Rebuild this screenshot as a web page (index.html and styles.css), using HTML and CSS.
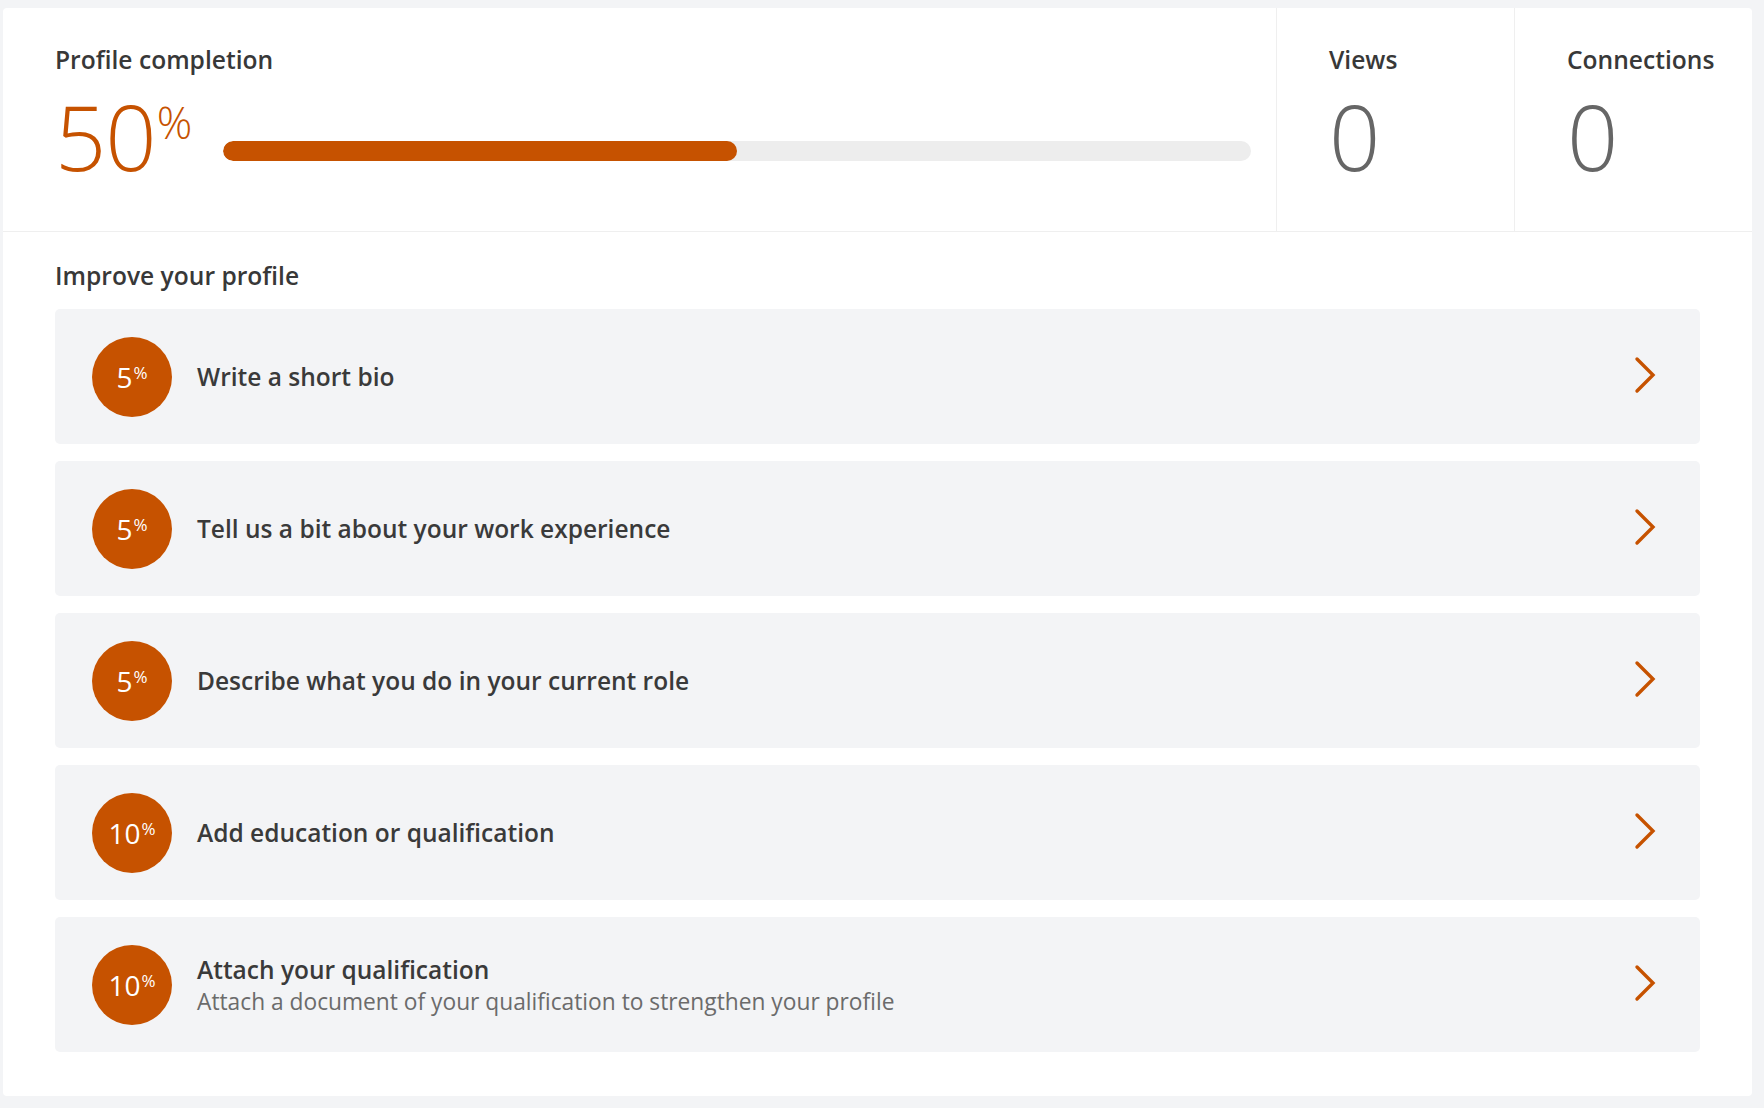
FILE: index.html
```
<!DOCTYPE html>
<html lang="en">
<head>
<meta charset="utf-8">
<title>Profile</title>
<link rel="stylesheet" href="styles.css">
</head>
<body>
<div class="card">
  <div class="summary">
    <div class="completion">
      <h2 class="label">Profile completion</h2>
      <div class="completion-row">
        <div class="big orange">50<sup class="big-pct">%</sup></div>
        <div class="bar"><div class="bar-fill" style="width:50%"></div></div>
      </div>
    </div>
    <div class="stat">
      <h2 class="label">Views</h2>
      <div class="big gray">0</div>
    </div>
    <div class="stat">
      <h2 class="label">Connections</h2>
      <div class="big gray">0</div>
    </div>
  </div>
  <div class="improve">
    <h2 class="label">Improve your profile</h2>
    <ul class="tasks">
      <li class="task">
        <div class="badge">5<sup>%</sup></div>
        <div class="task-text"><div class="task-title">Write a short bio</div></div>
        <svg class="chev" viewBox="0 0 22 38" width="22" height="38"><path d="M3 3 L19 19 L3 35" fill="none" stroke="#c65200" stroke-width="3.4" stroke-linecap="round" stroke-linejoin="miter"/></svg>
      </li>
      <li class="task">
        <div class="badge">5<sup>%</sup></div>
        <div class="task-text"><div class="task-title">Tell us a bit about your work experience</div></div>
        <svg class="chev" viewBox="0 0 22 38" width="22" height="38"><path d="M3 3 L19 19 L3 35" fill="none" stroke="#c65200" stroke-width="3.4" stroke-linecap="round" stroke-linejoin="miter"/></svg>
      </li>
      <li class="task">
        <div class="badge">5<sup>%</sup></div>
        <div class="task-text"><div class="task-title">Describe what you do in your current role</div></div>
        <svg class="chev" viewBox="0 0 22 38" width="22" height="38"><path d="M3 3 L19 19 L3 35" fill="none" stroke="#c65200" stroke-width="3.4" stroke-linecap="round" stroke-linejoin="miter"/></svg>
      </li>
      <li class="task">
        <div class="badge">10<sup>%</sup></div>
        <div class="task-text"><div class="task-title">Add education or qualification</div></div>
        <svg class="chev" viewBox="0 0 22 38" width="22" height="38"><path d="M3 3 L19 19 L3 35" fill="none" stroke="#c65200" stroke-width="3.4" stroke-linecap="round" stroke-linejoin="miter"/></svg>
      </li>
      <li class="task">
        <div class="badge">10<sup>%</sup></div>
        <div class="task-text">
          <div class="task-title">Attach your qualification</div>
          <div class="task-sub">Attach a document of your qualification to strengthen your profile</div>
        </div>
        <svg class="chev" viewBox="0 0 22 38" width="22" height="38"><path d="M3 3 L19 19 L3 35" fill="none" stroke="#c65200" stroke-width="3.4" stroke-linecap="round" stroke-linejoin="miter"/></svg>
      </li>
    </ul>
  </div>
</div>
</body>
</html>
```
FILE: styles.css
```
* { box-sizing: border-box; }
html, body { margin: 0; padding: 0; }
body {
  background: #f3f4f6;
  font-family: "Open Sans", "Noto Sans", sans-serif;
  color: #353535;
  padding: 8px 12px 11px 3px;
}
.card {
  background: #fff;
  border-radius: 4px;
  padding-bottom: 44px;
}
.summary {
  display: flex;
  border-bottom: 1px solid #efefef;
}
.completion {
  flex: 1;
  padding: 35px 25px 50px 52px;
}
.stat {
  width: 238px;
  border-left: 1px solid #efefef;
  padding: 35px 0 50px 52px;
}
.label {
  margin: 0;
  font-size: 24.6px;
  line-height: 33px;
  font-weight: 600;
  color: #383838;
}
.completion-row {
  display: flex;
  align-items: flex-end;
  margin-top: 15px;
}
.big {
  margin-top: 15px;
  font-size: 90px;
  line-height: 90px;
  font-weight: 300;
  letter-spacing: -1px;
}
.completion-row .big { margin-top: 0; }
.orange { color: #c65200; }
.gray { color: #666; }
.big-pct {
  font-size: 44px;
  line-height: 0;
  vertical-align: top;
  position: relative;
  top: 31px;
  margin-left: 1px;
}
.bar {
  flex: 1;
  height: 20px;
  border-radius: 10px;
  background: #ededed;
  margin-left: 32px;
  margin-bottom: 20px;
  overflow: hidden;
}
.bar-fill {
  height: 100%;
  background: #c65200;
  border-radius: 10px;
}
.improve {
  padding: 27px 52px 0 52px;
}
.tasks {
  list-style: none;
  margin: 17px 0 0 0;
  padding: 0;
  display: flex;
  flex-direction: column;
  gap: 17px;
}
.task {
  display: flex;
  align-items: center;
  height: 135px;
  background: #f3f4f6;
  border-radius: 5px;
  padding: 0 44px 0 37px;
}
.badge {
  width: 80px;
  height: 80px;
  border-radius: 50%;
  background: #c65200;
  color: #fff;
  font-size: 28px;
  font-weight: 400;
  display: flex;
  align-items: center;
  justify-content: center;
  flex-shrink: 0;
}
.badge sup {
  font-size: 17px;
  line-height: 0;
  position: relative;
  top: -4px;
  margin-left: 1px;
}
.task-text {
  flex: 1;
  margin-left: 25px;
}
.task-title {
  font-size: 24.5px;
  line-height: 33px;
  font-weight: 600;
  color: #3a3a3a;
}
.task-sub {
  font-size: 22.75px;
  line-height: 31px;
  font-weight: 400;
  color: #6b6b6b;
}
.chev {
  flex-shrink: 0;
  margin-bottom: 4px;
}
```
